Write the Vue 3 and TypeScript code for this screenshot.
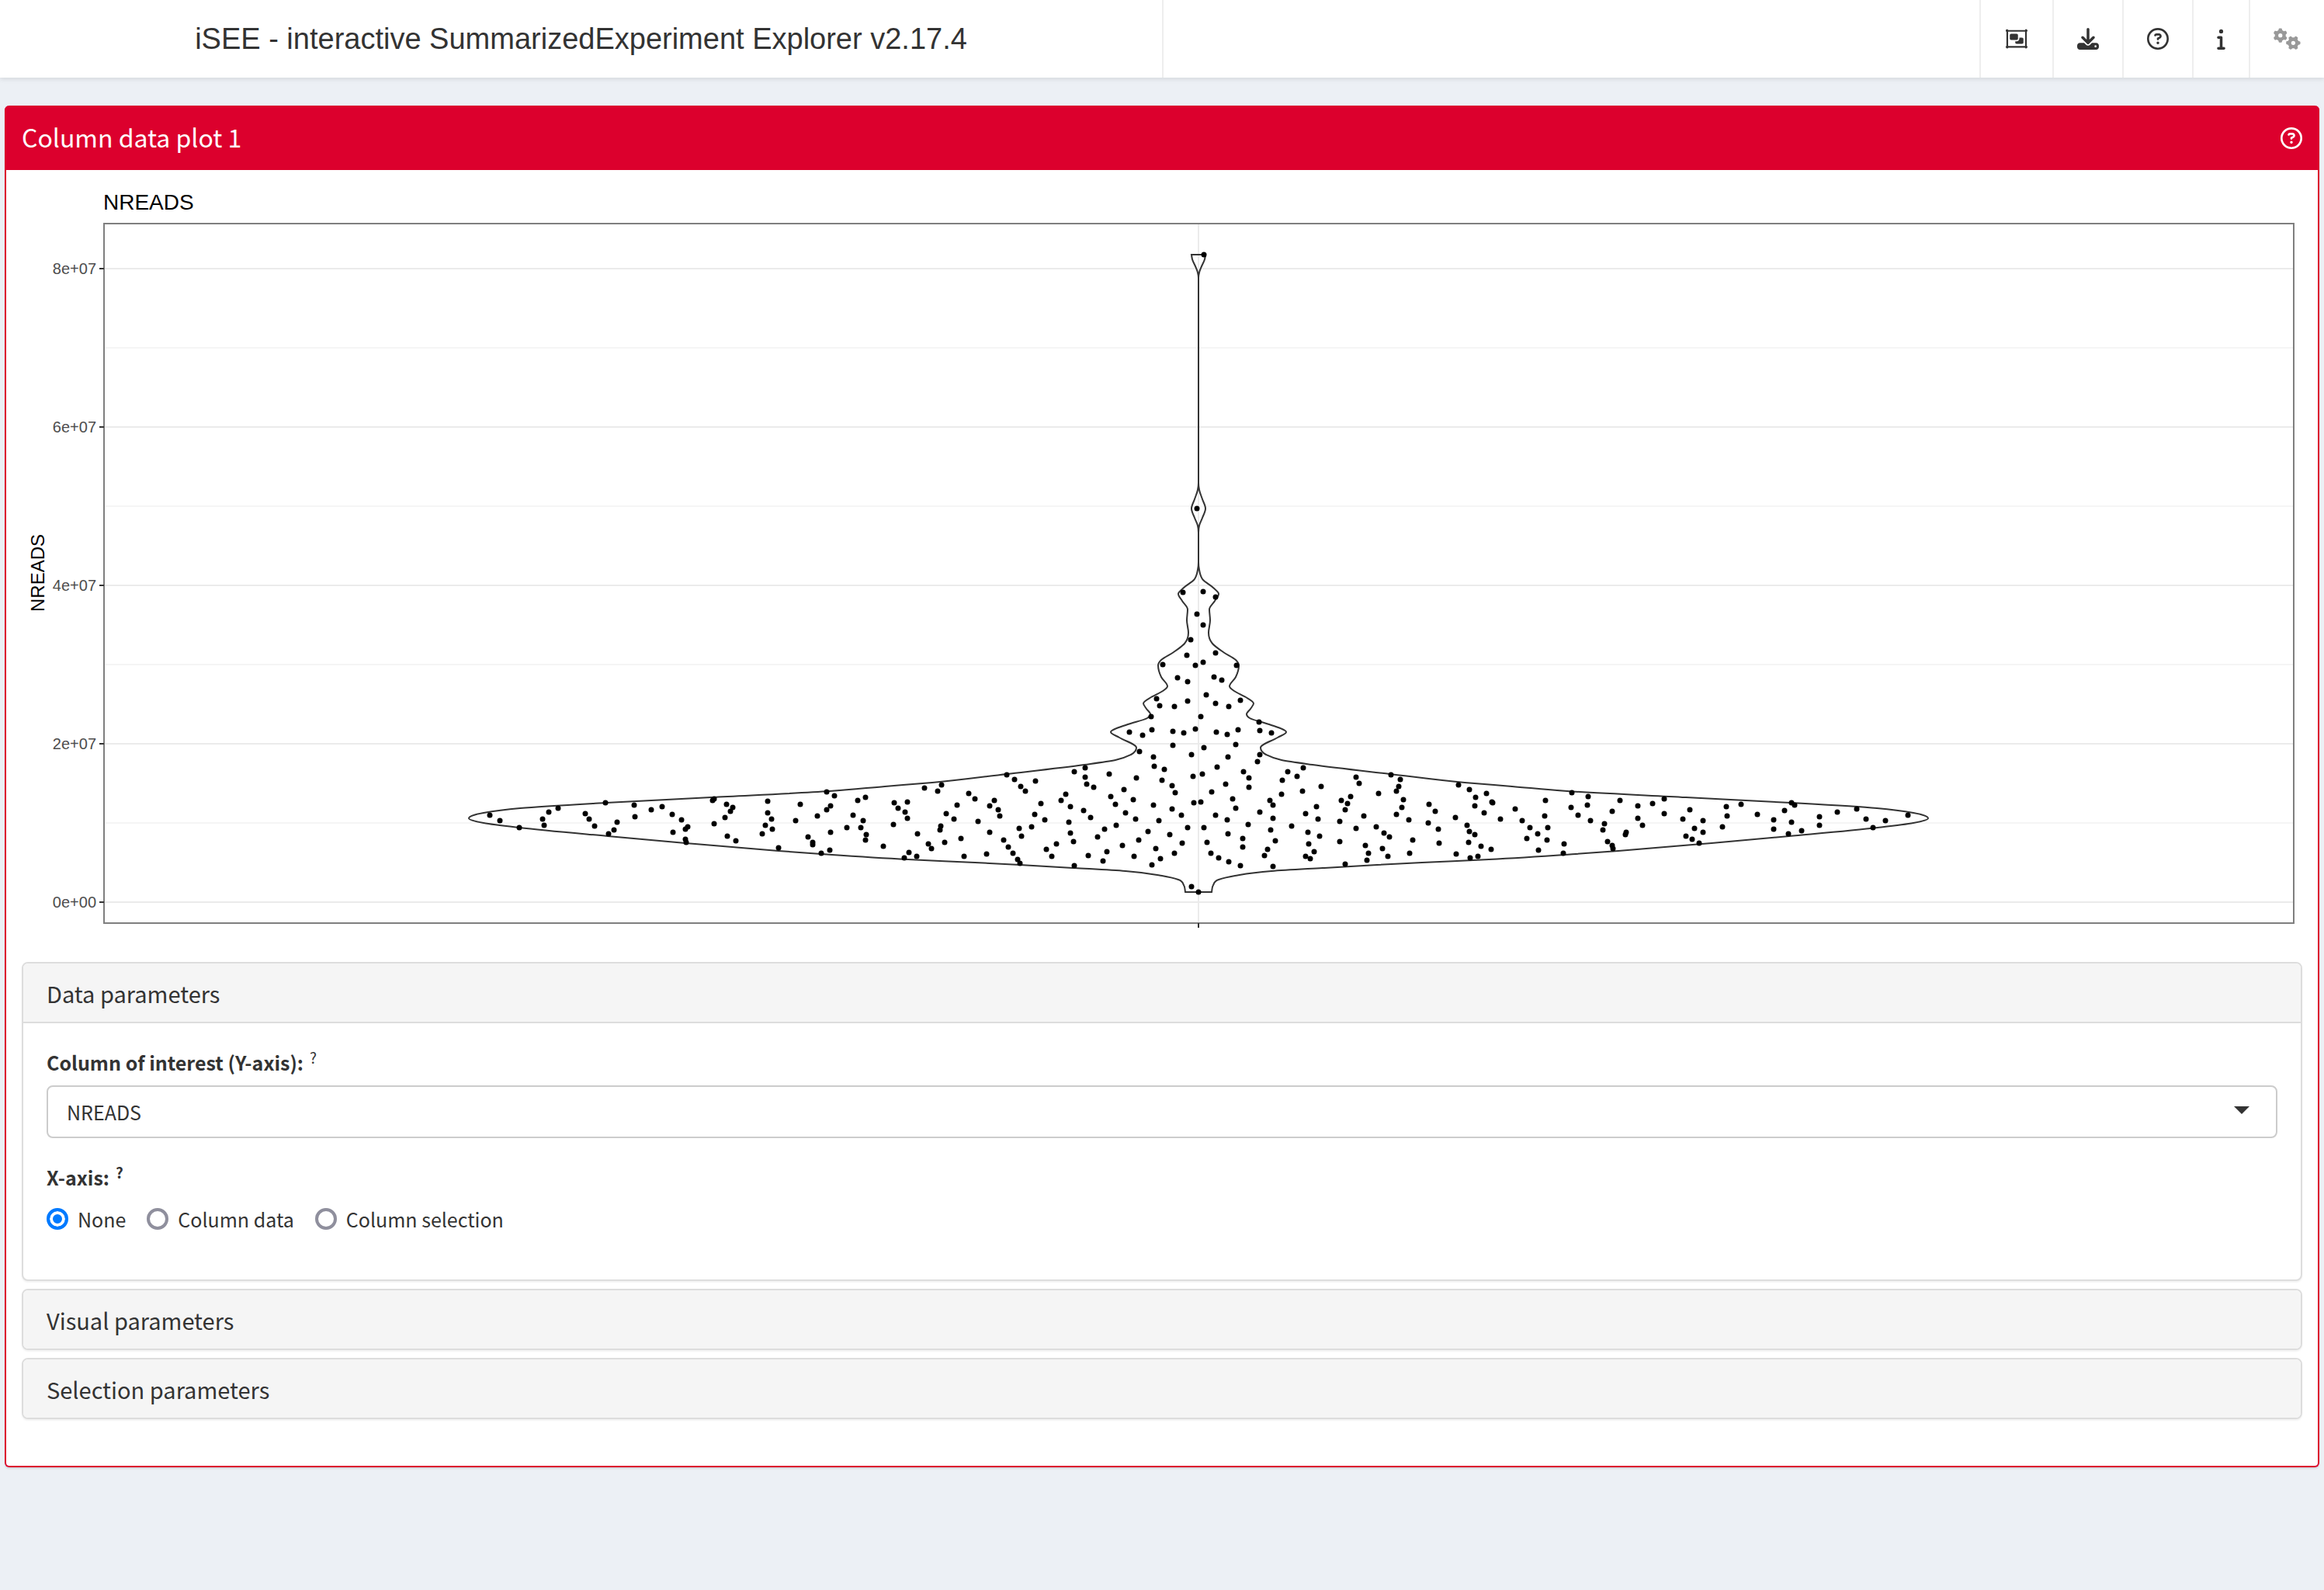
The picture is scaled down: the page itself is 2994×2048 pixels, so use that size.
<script setup lang="ts">
import { computed, ref } from 'vue'

type Point = [number, number]

interface NavItem {
  label: string
  box: string
  size: number
  path: string
  muted?: boolean
}

const circleQuestion =
  'M464 256A208 208 0 1 0 48 256a208 208 0 1 0 416 0zM0 256a256 256 0 1 1 512 0A256 256 0 1 1 0 256zm169.8-90.7c7.9-22.3 29.1-37.3 52.8-37.3h58.3c34.9 0 63.1 28.3 63.1 63.1c0 22.6-12.1 43.5-31.7 54.8L280 264.4c-.2 13-10.9 23.6-24 23.6c-13.3 0-24-10.7-24-24V250.5c0-8.6 4.6-16.5 12.1-20.8l44.3-25.4c4.7-2.7 7.6-7.7 7.6-13.1c0-8.4-6.8-15.1-15.1-15.1H222.6c-3.4 0-6.4 2.1-7.5 5.3l-.4 1.2c-4.4 12.5-18.2 19-30.6 14.6s-19-18.2-14.6-30.6l.4-1.2zM224 352a32 32 0 1 1 64 0 32 32 0 1 1 -64 0z'

const navItems: NavItem[] = [
  {
    label: 'Organization',
    box: '0 0 576 512',
    size: 32,
    path: 'M32 64a32 32 0 0 1 60-16H484a32 32 0 1 1 44 44V420a32 32 0 1 1-44 44H92a32 32 0 1 1-44-44V92A32 32 0 0 1 32 64zM92 88L88 92V420L92 424H484L488 420V92L484 88zM128 168c0-17.700 14.300-32 32-32H288c17.700 0 32 14.300 32 32v84c0 17.700-14.300 32-32 32H160c-17.700 0-32-14.300-32-32V168zM256 316h32c35.300 0 64-28.700 64-64V228h64c17.700 0 32 14.300 32 32v84c0 17.700-14.300 32-32 32H288c-17.700 0-32-14.300-32-32V316z',
  },
  {
    label: 'Export',
    box: '0 0 512 512',
    size: 28,
    path: 'M288 32c0-17.700-14.300-32-32-32s-32 14.300-32 32V274.700l-73.400-73.400c-12.500-12.500-32.800-12.500-45.300 0s-12.500 32.800 0 45.300l128 128c12.500 12.500 32.800 12.500 45.300 0l128-128c12.500-12.500 12.500-32.800 0-45.300s-32.800-12.500-45.300 0L288 274.700V32zM64 352c-35.300 0-64 28.700-64 64v32c0 35.300 28.700 64 64 64H448c35.300 0 64-28.700 64-64V416c0-35.300-28.700-64-64-64H346.500l-45.300 45.300c-25 25-65.500 25-90.500 0L165.500 352H64zm368 56a24 24 0 1 1 0 48 24 24 0 1 1 0-48z',
  },
  { label: 'Documentation', box: '0 0 512 512', size: 28, path: circleQuestion },
  {
    label: 'Additional information',
    box: '0 0 192 512',
    size: 11,
    path: 'M48 80a48 48 0 1 1 96 0A48 48 0 1 1 48 80zM0 224c0-17.700 14.300-32 32-32H96c17.700 0 32 14.300 32 32V448h32c17.700 0 32 14.300 32 32s-14.300 32-32 32H32c-17.700 0-32-14.300-32-32s14.300-32 32-32H64V256H32c-17.700 0-32-14.300-32-32z',
  },
  {
    label: 'Settings',
    box: '0 0 640 512',
    size: 35,
    muted: true,
    path: 'M308.500 135.300c7.100-6.300 9.900-16.200 6.200-25c-2.300-5.300-4.800-10.500-7.600-15.500L304 89.400c-3-5-6.300-9.900-9.800-14.600c-5.700-7.600-15.700-10.100-24.700-7.100l-28.200 9.300c-10.700-8.800-23-16-36.200-20.900L199 27.100c-1.900-9.300-9.100-16.700-18.500-17.800C173.900 8.400 167.200 8 160.400 8h-.7c-6.800 0-13.500 .4-20.100 1.200c-9.400 1.100-16.600 8.600-18.500 17.800L115 56.100c-13.300 5-25.500 12.100-36.200 20.900L50.500 67.800c-9-3-19-.5-24.700 7.100c-3.500 4.700-6.800 9.600-9.900 14.600l-3 5.300c-2.800 5-5.300 10.200-7.600 15.600c-3.700 8.700-.9 18.600 6.200 25l22.200 19.800C32.600 161.900 32 168.900 32 176s.6 14.100 1.700 20.900L11.500 216.700c-7.100 6.300-9.900 16.200-6.200 25c2.300 5.300 4.800 10.500 7.600 15.600l3 5.200c3 5.100 6.300 9.900 9.900 14.600c5.700 7.600 15.700 10.100 24.700 7.100l28.200-9.300c10.700 8.800 23 16 36.200 20.900l6.100 29.100c1.900 9.300 9.100 16.700 18.500 17.800c6.700 .8 13.500 1.200 20.400 1.200s13.700-.4 20.400-1.200c9.400-1.100 16.600-8.600 18.500-17.800l6.100-29.100c13.300-5 25.500-12.100 36.200-20.900l28.200 9.300c9 3 19 .5 24.700-7.100c3.500-4.700 6.800-9.500 9.800-14.600l3.100-5.400c2.800-5 5.300-10.200 7.600-15.500c3.700-8.700 .9-18.600-6.200-25l-22.200-19.800c1.100-6.800 1.700-13.800 1.700-20.900s-.6-14.100-1.700-20.900l22.200-19.800zM112 176a48 48 0 1 1 96 0 48 48 0 1 1 -96 0zM504.700 500.500c6.300 7.100 16.200 9.900 25 6.200c5.300-2.300 10.500-4.800 15.500-7.600l5.400-3.100c5-3 9.900-6.300 14.600-9.800c7.600-5.700 10.100-15.700 7.100-24.700l-9.300-28.200c8.800-10.700 16-23 20.900-36.200l29.100-6.100c9.300-1.900 16.700-9.100 17.800-18.500c.8-6.700 1.200-13.500 1.200-20.400s-.4-13.700-1.200-20.400c-1.100-9.400-8.600-16.600-17.800-18.500L583.900 307c-5-13.300-12.100-25.500-20.900-36.200l9.300-28.200c3-9 .5-19-7.100-24.700c-4.700-3.500-9.600-6.800-14.600-9.900l-5.300-3c-5-2.800-10.200-5.300-15.600-7.600c-8.700-3.700-18.600-.9-25 6.200l-19.800 22.200c-6.800-1.100-13.800-1.700-20.900-1.700s-14.100 .6-20.900 1.700l-19.800-22.200c-6.300-7.100-16.200-9.900-25-6.200c-5.300 2.300-10.500 4.800-15.600 7.600l-5.200 3c-5.100 3-9.900 6.300-14.600 9.900c-7.600 5.700-10.100 15.700-7.100 24.700l9.300 28.200c-8.800 10.700-16 23-20.900 36.200L315.100 313c-9.300 1.900-16.700 9.100-17.800 18.500c-.8 6.700-1.200 13.500-1.200 20.400s.4 13.700 1.200 20.400c1.100 9.400 8.600 16.600 17.800 18.500l29.100 6.100c5 13.300 12.100 25.500 20.900 36.200l-9.300 28.200c-3 9-.5 19 7.100 24.700c4.700 3.500 9.500 6.800 14.600 9.800l5.400 3.100c5 2.800 10.200 5.300 15.500 7.600c8.700 3.700 18.600 .9 25-6.200l19.800-22.200c6.800 1.100 13.800 1.700 20.900 1.700s14.100-.6 20.900-1.700l19.800 22.200zM464 304a48 48 0 1 1 0 96 48 48 0 1 1 0-96z',
  },
]

// Plot geometry, in the units of the plot's viewBox
const frame = { left: 134, right: 2955, top: 288, bottom: 1189 }
const centre = 1544
const majors = [
  { y: 346, label: '8e+07' },
  { y: 550, label: '6e+07' },
  { y: 754, label: '4e+07' },
  { y: 958, label: '2e+07' },
  { y: 1162, label: '0e+00' },
]
const minors = [448, 652, 856, 1060]

// Violin outline: half width at each height
const outline: Point[] = [
  [9, 328], [8, 334], [4, 343], [1, 351], [0, 358], [0, 622], [1, 631], [5, 643], [9, 655],
  [5, 667], [1, 677], [0, 686], [0, 724], [1, 734], [6, 747], [19, 757], [26, 765], [21, 774],
  [14, 785], [15, 799], [13, 815], [18, 829], [32, 840], [48, 850], [52, 857], [48, 872],
  [40, 884], [46, 890], [61, 898], [71, 906], [67, 913], [62, 920], [66, 925], [91, 933],
  [113, 943], [102, 950], [80, 963], [87, 972], [107, 979], [147, 985], [247, 997], [343, 1008],
  [404, 1013], [475, 1019], [628, 1027], [763, 1034], [874, 1041], [921, 1047], [940, 1054],
  [921, 1060], [875, 1066], [761, 1077], [661, 1086], [541, 1096], [486, 1100], [374, 1107],
  [288, 1111], [230, 1114], [160, 1118], [94, 1122], [47, 1128], [26, 1133], [19, 1140], [17, 1149],
]

// Cubic through the outline without overshoot, mirrored to both sides
const violin = computed(() => {
  const n = outline.length
  const slopes: number[] = []
  for (let i = 0; i < n - 1; i++) {
    slopes.push((outline[i + 1][0] - outline[i][0]) / (outline[i + 1][1] - outline[i][1]))
  }
  const tangents = outline.map((p, i) => {
    if (i === 0) return slopes[0]
    if (i === n - 1) return slopes[n - 2]
    const a = slopes[i - 1]
    const b = slopes[i]
    if (a * b <= 0) return 0
    const before = p[1] - outline[i - 1][1]
    const after = outline[i + 1][1] - p[1]
    const blend = (a * after + b * before) / (before + after)
    const limit = 3 * Math.min(Math.abs(a), Math.abs(b))
    return Math.sign(blend) * Math.min(Math.abs(blend), limit)
  })
  const side = (sign: number, pts: Point[], tan: number[]) => {
    let d = ''
    for (let i = 0; i < pts.length - 1; i++) {
      const [w0, y0] = pts[i]
      const [w1, y1] = pts[i + 1]
      const h = (y1 - y0) / 3
      d += `C${centre + sign * (w0 + tan[i] * h)} ${y0 + h} ${centre + sign * (w1 - tan[i + 1] * h)} ${y1 - h} ${centre + sign * w1} ${y1}`
    }
    return d
  }
  const down = side(-1, outline, tangents)
  const up = side(1, [...outline].reverse(), [...tangents].reverse())
  return `M${centre - outline[0][0]} ${outline[0][1]}${down}H${centre + outline[n - 1][0]}${up}Z`
})

const points: Point[] = [
  [631, 1050], [644, 1057], [669, 1066], [699, 1055], [701, 1063], [707, 1046], [719, 1041],
  [754, 1048], [759, 1055], [766, 1064], [780, 1034], [784, 1074], [791, 1069], [795, 1059],
  [817, 1037], [818, 1052], [839, 1043], [853, 1039], [866, 1049], [878, 1056], [886, 1065],
  [883, 1068], [867, 1072], [883, 1081], [884, 1085], [918, 1031], [920, 1029], [920, 1061],
  [936, 1036], [944, 1040], [941, 1045], [934, 1053], [937, 1077], [948, 1083], [989, 1032],
  [989, 1047], [994, 1055], [986, 1063], [995, 1068], [982, 1074], [1003, 1092], [1025, 1057],
  [1031, 1036], [1041, 1078], [1047, 1085], [1047, 1088], [1053, 1051], [1065, 1020], [1075, 1025],
  [1070, 1038], [1065, 1043], [1070, 1072], [1069, 1095], [1058, 1099], [1091, 1066], [1099, 1050],
  [1105, 1031], [1115, 1027], [1112, 1057], [1109, 1066], [1116, 1075], [1115, 1082], [1138, 1090],
  [1152, 1034], [1157, 1041], [1166, 1046], [1169, 1033], [1169, 1054], [1151, 1062], [1165, 1105],
  [1171, 1098], [1181, 1103], [1182, 1074], [1191, 1015], [1208, 1019], [1213, 1011], [1219, 1048],
  [1229, 1055], [1233, 1037], [1212, 1064], [1211, 1069], [1196, 1087], [1200, 1093], [1217, 1085],
  [1238, 1080], [1242, 1103], [1248, 1022], [1256, 1029], [1260, 1058], [1275, 1038], [1281, 1031],
  [1286, 1043], [1288, 1051], [1275, 1072], [1293, 1082], [1299, 1091], [1305, 1099], [1311, 1107],
  [1314, 1112], [1271, 1100], [1297, 998], [1307, 1004], [1315, 1013], [1321, 1019], [1334, 1006],
  [1341, 1035], [1333, 1049], [1346, 1056], [1329, 1065], [1313, 1067], [1316, 1077], [1348, 1094],
  [1355, 1103], [1361, 1087], [1367, 1031], [1373, 1023], [1379, 1039], [1377, 1059], [1379, 1073],
  [1383, 1084], [1384, 1115], [1384, 994], [1398, 989], [1398, 1001], [1400, 1010], [1409, 1014],
  [1429, 997], [1396, 1044], [1405, 1053], [1402, 1102], [1414, 1078], [1423, 1068], [1426, 1097],
  [1421, 1109], [1431, 1026], [1437, 1036], [1438, 1063], [1450, 1047], [1448, 1017], [1460, 1030],
  [1464, 1002], [1463, 1055], [1446, 1089], [1467, 1082], [1461, 1103], [1479, 1071], [1468, 968],
  [1486, 975], [1487, 987], [1500, 991], [1497, 1005], [1486, 1037], [1493, 1057], [1489, 1093],
  [1495, 1106], [1484, 1114], [1510, 1012], [1514, 1021], [1510, 1042], [1522, 1050], [1507, 1075],
  [1530, 1066], [1523, 1086], [1513, 1099], [1535, 1142], [1544, 1149], [1455, 943], [1472, 947],
  [1484, 940], [1483, 923], [1490, 900], [1494, 909], [1513, 910], [1530, 903], [1517, 873],
  [1530, 878], [1511, 942], [1525, 944], [1540, 939], [1547, 923], [1511, 960], [1535, 972],
  [1551, 963], [1537, 1000], [1549, 997], [1538, 1034], [1547, 1033], [1564, 872], [1574, 876],
  [1554, 895], [1566, 906], [1583, 910], [1598, 902], [1622, 930], [1623, 941], [1638, 944],
  [1567, 943], [1581, 946], [1595, 940], [1592, 959], [1582, 975], [1568, 988], [1623, 972],
  [1620, 981], [1602, 994], [1609, 1002], [1609, 1014], [1579, 1010], [1561, 1020], [1588, 1029],
  [1592, 1041], [1566, 1050], [1581, 1056], [1551, 1066], [1582, 1074], [1608, 1062], [1601, 1080],
  [1601, 1091], [1555, 1085], [1560, 1099], [1570, 1105], [1583, 1110], [1598, 1115], [1640, 1116],
  [1629, 1102], [1633, 1094], [1643, 1083], [1637, 1069], [1640, 1054], [1623, 1046], [1636, 1031],
  [1640, 1037], [1651, 1023], [1652, 1005], [1659, 994], [1671, 1000], [1679, 989], [1678, 1019],
  [1702, 1013], [1696, 1039], [1682, 1048], [1698, 1055], [1664, 1064], [1685, 1072], [1700, 1077],
  [1686, 1087], [1693, 1097], [1682, 1103], [1688, 1106], [1747, 1001], [1751, 1009], [1740, 1026],
  [1728, 1031], [1736, 1035], [1733, 1043], [1726, 1058], [1757, 1051], [1747, 1067], [1726, 1084],
  [1733, 1113], [1759, 1089], [1763, 1099], [1761, 1108], [1776, 1022], [1773, 1065], [1783, 1073],
  [1790, 1078], [1781, 1093], [1788, 1103], [1792, 998], [1804, 1004], [1802, 1013], [1799, 1019],
  [1808, 1030], [1806, 1040], [1799, 1049], [1815, 1056], [1820, 1082], [1816, 1099], [1841, 1036],
  [1849, 1045], [1840, 1060], [1853, 1068], [1854, 1086], [1875, 1053], [1876, 1100], [1879, 1011],
  [1893, 1017], [1901, 1027], [1915, 1022], [1922, 1033], [1923, 1034], [1900, 1038], [1912, 1047],
  [1933, 1055], [1890, 1063], [1893, 1071], [1900, 1075], [1892, 1085], [1908, 1090], [1921, 1094],
  [1894, 1105], [1904, 1103], [1952, 1042], [1961, 1057], [1971, 1066], [1967, 1080], [1981, 1074],
  [1991, 1031], [1990, 1051], [1994, 1066], [1993, 1082], [1982, 1095], [2015, 1087], [2014, 1099],
  [2025, 1021], [2024, 1040], [2033, 1050], [2045, 1037], [2046, 1026], [2049, 1057], [2067, 1061],
  [2065, 1069], [2077, 1045], [2087, 1031], [2095, 1072], [2094, 1075], [2071, 1084], [2077, 1089],
  [2078, 1093], [2110, 1038], [2110, 1054], [2116, 1063], [2129, 1035], [2144, 1029], [2144, 1048],
  [2177, 1043], [2168, 1055], [2194, 1057], [2183, 1067], [2194, 1072], [2172, 1077], [2180, 1081],
  [2189, 1086], [2224, 1039], [2225, 1051], [2219, 1065], [2243, 1036], [2264, 1049], [2285, 1056],
  [2285, 1068], [2299, 1044], [2308, 1034], [2312, 1037], [2308, 1059], [2304, 1074], [2321, 1070],
  [2344, 1052], [2344, 1063], [2367, 1046], [2392, 1042], [2404, 1055], [2413, 1066], [2429, 1057],
  [2458, 1050], [1542, 655], [1524, 763], [1550, 762], [1566, 769], [1542, 791], [1550, 805],
  [1534, 824], [1529, 844], [1566, 841], [1550, 853], [1540, 857], [1498, 856], [1593, 857],
  [1551, 328],
]

const yAxis = ref('NREADS')
const xAxis = ref('None')
const xChoices = ['None', 'Column data', 'Column selection']
const dataOpen = ref(true)
</script>

<template>
  <header class="navbar">
    <h1 class="brand">iSEE - interactive SummarizedExperiment Explorer v2.17.4</h1>
    <nav class="menu">
      <a v-for="item in navItems" :key="item.label" href="#" class="menu-item" :class="{ muted: item.muted }" :aria-label="item.label">
        <svg :viewBox="item.box" :style="{ width: item.size + 'px' }" aria-hidden="true">
          <path :d="item.path" fill-rule="evenodd" />
        </svg>
      </a>
    </nav>
  </header>

  <main class="content">
    <section class="card">
      <div class="card-header">
        <h2>Column data plot 1</h2>
        <button type="button" class="help" aria-label="Panel help">
          <svg viewBox="0 0 512 512" aria-hidden="true"><path :d="circleQuestion" /></svg>
        </button>
      </div>

      <div class="card-body">
        <svg class="plot" viewBox="28 239 2938 1000" role="img" aria-label="Violin plot of NREADS">
          <g class="minor">
            <line v-for="y in minors" :key="y" :x1="frame.left" :x2="frame.right" :y1="y" :y2="y" />
          </g>
          <g class="major">
            <line v-for="m in majors" :key="m.y" :x1="frame.left" :x2="frame.right" :y1="m.y" :y2="m.y" />
            <line :x1="centre" :x2="centre" :y1="frame.top" :y2="frame.bottom" />
          </g>
          <path class="violin" :d="violin" />
          <circle v-for="(p, i) in points" :key="i" :cx="p[0]" :cy="p[1]" r="3.5" />
          <rect class="frame" :x="frame.left" :y="frame.top" :width="frame.right - frame.left" :height="frame.bottom - frame.top" />
          <g class="ticks">
            <line v-for="m in majors" :key="m.y" :x1="frame.left - 6" :x2="frame.left" :y1="m.y" :y2="m.y" />
            <line :x1="centre" :x2="centre" :y1="frame.bottom" :y2="frame.bottom + 6" />
          </g>
          <g class="tick-labels">
            <text v-for="m in majors" :key="m.y" x="124" :y="m.y + 7">{{ m.label }}</text>
          </g>
          <text class="plot-title" x="133" y="270">NREADS</text>
          <text class="axis-title" transform="translate(57 738) rotate(-90)">NREADS</text>
        </svg>

        <section class="panel">
          <button type="button" class="panel-heading" :class="{ open: dataOpen }" :aria-expanded="dataOpen" @click="dataOpen = !dataOpen">
            Data parameters
          </button>
          <div v-if="dataOpen" class="panel-body">
            <div class="field-label">
              <label for="y-axis">Column of interest (Y-axis):</label>
              <sup>?</sup>
            </div>
            <div class="select">
              <select id="y-axis" v-model="yAxis">
                <option>NREADS</option>
              </select>
              <svg viewBox="0 0 20 10" aria-hidden="true"><path d="M0 0H20L10 10z" /></svg>
            </div>
            <div class="field-label">
              <b id="x-axis-label">X-axis:</b>
              <sup class="strong">?</sup>
            </div>
            <div class="radios" role="radiogroup" aria-labelledby="x-axis-label">
              <label v-for="choice in xChoices" :key="choice" class="radio">
                <input v-model="xAxis" type="radio" name="x-axis" :value="choice" />
                <span>{{ choice }}</span>
              </label>
            </div>
          </div>
        </section>
        <section class="panel">
          <button type="button" class="panel-heading" aria-expanded="false">Visual parameters</button>
        </section>
        <section class="panel">
          <button type="button" class="panel-heading" aria-expanded="false">Selection parameters</button>
        </section>
      </div>
    </section>
  </main>
</template>

<style>
body {
  background: #ecf0f5;
}
</style>

<style scoped>
* {
  box-sizing: border-box;
}

.navbar,
.content {
  font-family: 'Noto Sans CJK SC', 'Noto Sans', sans-serif;
  color: #333;
}

.navbar {
  display: flex;
  height: 100px;
  background: #fff;
  box-shadow: 0 2px 6px rgba(0, 0, 0, 0.1);
}

.brand {
  box-sizing: content-box;
  width: 50%;
  margin: 0;
  border-right: 2px solid #eee;
  font: 400 38px/100px 'Liberation Sans', sans-serif;
  text-align: center;
}

.menu {
  display: flex;
  margin-left: auto;
}

.menu-item {
  display: flex;
  align-items: center;
  padding: 0 30px;
  border-left: 2px solid #eee;
}

.menu-item svg {
  display: block;
  height: 28px;
  fill: #333;
}

.menu-item.muted svg {
  fill: #999;
}

.content {
  padding: 36px 6px;
}

.card {
  border: 2px solid #dc002d;
  border-top: 0;
  border-radius: 6px;
  background: #fff;
  box-shadow: 0 2px 2px rgba(0, 0, 0, 0.1);
}

.card-header {
  display: flex;
  align-items: center;
  justify-content: space-between;
  height: 83px;
  margin: 0 -2px;
  padding: 0 22px;
  border-radius: 6px 6px 0 0;
  background: #dc002d;
  color: #fff;
}

.card-header h2 {
  margin: 0;
  padding-bottom: 4px;
  font-size: 32px;
  font-weight: 400;
  line-height: 40px;
}

.help {
  padding: 0;
  border: 0;
  background: none;
}

.help svg {
  display: block;
  width: 28px;
  height: 28px;
  fill: #fff;
}

.card-body {
  padding: 20px 20px 60px;
}

.plot {
  display: block;
  width: 100%;
  height: auto;
  font-family: 'Liberation Sans', sans-serif;
}

.minor line {
  stroke: #f5f5f5;
  stroke-width: 2;
}

.major line {
  stroke: #ebebeb;
  stroke-width: 2;
}

.violin {
  fill: none;
  stroke: #333;
  stroke-width: 2;
}

.frame {
  fill: none;
  stroke: #7f7f7f;
  stroke-width: 2;
}

.ticks line {
  stroke: #333;
  stroke-width: 2;
}

.tick-labels {
  fill: #4d4d4d;
  font-size: 20px;
  text-anchor: end;
}

.plot-title {
  font-size: 28px;
}

.axis-title {
  font-size: 24px;
  text-anchor: middle;
}

.panel {
  border: 2px solid #ddd;
  border-radius: 8px;
  background: #fff;
  box-shadow: 0 2px 2px rgba(0, 0, 0, 0.05);
}

.panel + .panel {
  margin-top: 10px;
}

.panel-heading {
  display: block;
  width: 100%;
  height: 75px;
  padding: 0 30px;
  border: 0;
  border-radius: 6px;
  background: #f5f5f5;
  color: #333;
  font-family: inherit;
  font-size: 29px;
  line-height: 40px;
  text-align: left;
}

.panel-heading.open {
  height: 77px;
  border-bottom: 2px solid #ddd;
  border-radius: 6px 6px 0 0;
}

.panel-body {
  padding: 30px 30px 58px;
  font-size: 25px;
  line-height: 40px;
}

.field-label label,
.field-label b {
  font-weight: 700;
}

.field-label sup {
  margin-left: 8px;
  font-size: 19px;
  line-height: 0;
}

.field-label .strong {
  font-weight: 700;
}

.select {
  position: relative;
  margin: 10px 0 30px;
}

.select select {
  display: block;
  width: 100%;
  height: 68px;
  padding: 0 24px;
  appearance: none;
  border: 2px solid #ccc;
  border-radius: 8px;
  background: #fff;
  color: #333;
  font-family: inherit;
  font-size: 25px;
}

.select svg {
  position: absolute;
  top: 27px;
  right: 36px;
  width: 20px;
  height: 10px;
  fill: #333;
  pointer-events: none;
}

.radios {
  display: flex;
  gap: 27px;
  margin-top: 14px;
}

.radio {
  display: flex;
  align-items: center;
  gap: 12px;
}

.radio input {
  width: 28px;
  height: 28px;
  margin: 0;
  appearance: none;
  border: 4px solid #8f8f9d;
  border-radius: 50%;
  background: #fff;
}

.radio input:checked {
  border-color: #007aff;
  background: #007aff;
  box-shadow: inset 0 0 0 4px #fff;
}
</style>
